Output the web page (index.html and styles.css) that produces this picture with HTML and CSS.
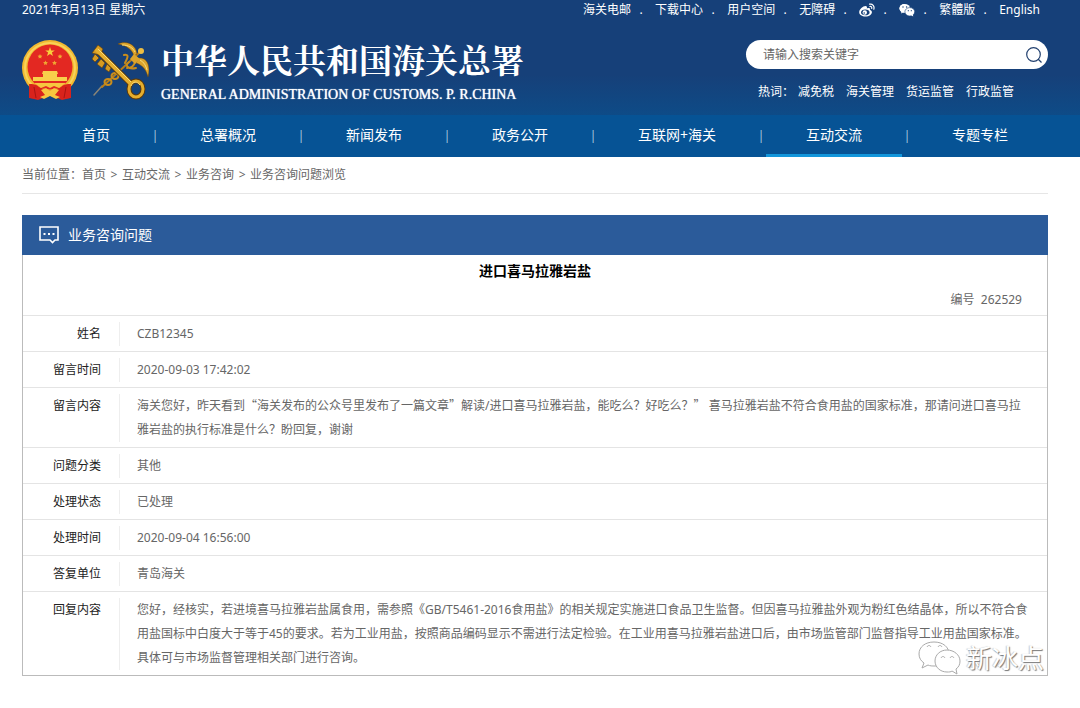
FILE: index.html
```html
<!DOCTYPE html>
<html lang="zh-CN">

<head>
  <meta charset="utf-8">
  <title>业务咨询问题</title>
  <link rel="stylesheet" href="styles.css">
</head>

<body>
  <header class="header">
    <div class="topbar">
      <span>2021年3月13日 星期六</span>
      <ul class="toplinks">
        <li><a href="#">海关电邮</a></li>
        <li><a href="#">下载中心</a></li>
        <li><a href="#">用户空间</a></li>
        <li><a href="#">无障碍</a></li>
        <li>
          <a href="#" aria-label="微博">
            <svg width="16" height="14" viewBox="0 0 16 14">
              <path fill="#fff" fill-rule="evenodd" d="M6.500 3C4 3 .2 6.200 .2 9.200c0 2.600 2.900 4.300 6.200 4.300 3.900 0 6.500-2.200 6.500-4.300 0-1.300-.9-1.900-1.900-2.200.5-1.500-.3-2.500-3.200-1.500C8.300 4 7.900 3 6.500 3zM6.300 6.500c2.600 0 4.300 1.200 4.300 2.900S8.700 12.300 6.300 12.300 2 11.200 2 9.500s1.800-3 4.300-3z"/>
              <circle cx="5.800" cy="9.500" r="2.200" fill="#fff"/>
              <circle cx="5.200" cy="10" r="0.800" fill="#164079"/>
              <path fill="none" stroke="#fff" stroke-width="1.200" stroke-linecap="round" d="M10.500 1.200c3-.7 5.300 1.900 4.300 5M10.900 3.500c1.300-.3 2.200.7 1.800 2"/>
            </svg>
          </a>
        </li>
        <li>
          <a href="#" aria-label="微信">
            <svg width="16" height="14" viewBox="0 0 16 14">
              <path fill="#fff" d="M5.800 1C2.800 1 .5 2.900.5 5.400c0 1.400.8 2.600 2 3.400L2 10.500l2-1 1.800.3z"/>
              <ellipse cx="5.800" cy="5.300" rx="5.300" ry="4.400" fill="#fff"/>
              <ellipse cx="10.800" cy="8.800" rx="4.900" ry="4.200" fill="#fff" stroke="#164079" stroke-width="0.600"/>
              <path fill="#fff" d="M12 12l2.200 1.600-.4-2.600z"/>
              <g fill="#164079"><circle cx="4" cy="4" r="0.700"/><circle cx="7.600" cy="4" r="0.700"/><circle cx="9.300" cy="7.700" r="0.600"/><circle cx="12.300" cy="7.700" r="0.600"/></g>
            </svg>
          </a>
        </li>
        <li><a href="#">繁體版</a></li>
        <li><a href="#">English</a></li>
      </ul>
    </div>

    <div class="banner">
      <a class="logo" href="#">
        <!-- 国徽 -->
        <svg width="56" height="60" viewBox="0 0 56 60">
          <path fill="#d8231c" d="M7 42h42v16l-9 1-12-4-12 4-9-1z"/>
          <circle cx="28" cy="28" r="28" fill="#f2b92f"/>
          <circle cx="28" cy="28" r="25" fill="none" stroke="#f9d25a" stroke-width="2"/>
          <circle cx="28" cy="27" r="22.500" fill="#e32822"/>
          <path fill="#f8cf3c" d="M28 7l1.200 3.400h3.600l-2.900 2.200 1.100 3.500-3-2.100-3 2.100 1.100-3.500-2.900-2.200h3.600z"/>
          <g fill="#f0a832">
            <path d="M18 14l.7 1.500 1.700.2-1.200 1.200.2 1.700-1.400-.8-1.400.8.200-1.700-1.200-1.200 1.700-.2z"/>
            <path d="M38 14l.7 1.500 1.700.2-1.200 1.200.2 1.700-1.400-.8-1.400.8.200-1.700-1.200-1.200 1.700-.2z"/>
            <path d="M23.500 20.500l.7 1.500 1.700.2-1.200 1.200.2 1.700-1.400-.8-1.400.8.200-1.700-1.200-1.200 1.700-.2z"/>
            <path d="M32.500 20.500l.7 1.500 1.700.2-1.200 1.200.2 1.700-1.400-.8-1.400.8.200-1.700-1.200-1.200 1.700-.2z"/>
          </g>
          <path fill="#f8d04b" d="M21 31h14l1 3h-1v3h10v4H11v-4h10v-3h-1z"/>
          <path fill="#d8231c" d="M7 44c4 0 7 0 10 3l11 4 11-4c3-3 6-3 10-3l-1 14-8 2-12-5-12 5-8-2z"/>
          <path fill="#f6c63f" d="M12 43h32l-7 5-5-2-4 2-4-2-5 2zM19 50l5-2 4 3 4-3 5 2-4 5 5 2-4 2-6-3-6 3-4-2 5-2z"/>
          <path fill="none" stroke="#a81512" d="M12 47l2 11M44 47l-2 11"/>
        </svg>
        <!-- 关徽 -->
        <svg class="key" width="58" height="58" viewBox="0 0 58 58">
          <g fill="none" stroke-linecap="round">
            <path d="M3 53l8-9" stroke="#8a8577" stroke-width="1.500"/>
            <path d="M11 45L49 10" stroke="#b67d1a" stroke-width="2"/>
            <g stroke="#c98d1c" stroke-width="2">
              <ellipse cx="17" cy="40" rx="3.500" ry="3"/>
              <ellipse cx="24" cy="34" rx="3.500" ry="3"/>
              <path d="M33 13c6-1 3 4 1 8M38 20c-5 3-1 8 7 6M36 26c5 0 7-2 8-6"/>
            </g>
          </g>
          <g fill="none" stroke="#5e3a08">
            <path d="M5 7l35 35" stroke-width="6"/>
            <ellipse cx="45" cy="47" rx="7" ry="8" stroke-width="5"/>
          </g>
          <path fill="#d79b21" stroke="#5e3a08" stroke-width="0.600" d="M1 11l6-8 5 4-3 6zM4 12l4 4-4 4-3-3zM10 17l4 4-3 5-5-4zM16 22l4 4-2 4-4-3z"/>
          <g fill="none" stroke="#e5ae2e">
            <path d="M5 7l35 35" stroke-width="4"/>
            <ellipse cx="45" cy="47" rx="7" ry="8" stroke-width="3"/>
          </g>
          <path fill="#dca42c" stroke="#6a430b" stroke-width="0.500" d="M27 2c8-4 18 0 19 10l-3 2C41 7 36 4 27 2zM48 16c8-1 12 8 9 19-2-8-6-12-12-14z"/>
          <path fill="#dca42c" d="M43 12l6 5-5 5-5-5z"/>
          <circle cx="50" cy="9" r="3" fill="#edbd43"/>
          <path fill="none" stroke="#f9dd7c" d="M7 7l33 33M40 44c2-5 6-5 9-1M31 3c7 0 11 3 13 7M49 18c4 2 6 6 7 10"/>
        </svg>
        <span class="names">
          <span class="name-cn">中华人民共和国海关总署</span>
          <span class="name-en">GENERAL ADMINISTRATION OF CUSTOMS. P. R.CHINA</span>
        </span>
      </a>

      <div class="search">
        <form class="searchbox">
          <input type="text" aria-label="搜索" placeholder="请输入搜索关键字">
          <button type="button" aria-label="搜索">
            <svg width="16" height="16" viewBox="0 0 16 16" fill="none" stroke="#22406f" stroke-width="1.200">
              <circle cx="7.500" cy="7.500" r="6.800"/>
              <path d="M12 12l3.500 3.500"/>
            </svg>
          </button>
        </form>
        <div class="hotwords">
          <span>热词：</span>
          <a href="#">减免税</a>
          <a href="#">海关管理</a>
          <a href="#">货运监管</a>
          <a href="#">行政监管</a>
        </div>
      </div>
    </div>
  </header>

  <nav>
    <ul class="nav">
      <li><a href="#">首页</a></li>
      <li><a href="#">总署概况</a></li>
      <li><a href="#">新闻发布</a></li>
      <li><a href="#">政务公开</a></li>
      <li><a href="#">互联网+海关</a></li>
      <li><a href="#" class="active">互动交流</a></li>
      <li><a href="#">专题专栏</a></li>
    </ul>
  </nav>

  <main class="main">
    <div class="crumbs">
      <span>当前位置：</span>
      <a href="#">首页</a>
      <span class="arrow">&gt;</span>
      <a href="#">互动交流</a>
      <span class="arrow">&gt;</span>
      <a href="#">业务咨询</a>
      <span class="arrow">&gt;</span>
      <a href="#">业务咨询问题浏览</a>
    </div>

    <section class="panel">
      <div class="panel-head">
        <svg width="20" height="18" viewBox="0 0 20 18" fill="none" stroke="#fff" stroke-width="1.600">
          <path d="M1 1h18v13h-3l-2.500 2.500L11 14H1z"/>
          <path stroke-width="2" d="M4.500 8h2M9 8h2M13.500 8h2"/>
        </svg>
        <h2>业务咨询问题</h2>
      </div>
      <h1>进口喜马拉雅岩盐</h1>
      <p class="number">编号&nbsp; 262529</p>

      <table class="detail">
        <tr><th scope="row">姓名</th><td><div>CZB12345</div></td></tr>
        <tr><th scope="row">留言时间</th><td><div>2020-09-03 17:42:02</div></td></tr>
        <tr><th scope="row">留言内容</th><td><div>海关您好，昨天看到<span class="quote">“</span>海关发布的公众号里发布了一篇文章<span class="quote">”</span>解读/进口喜马拉雅岩盐，能吃么？好吃么？<span class="quote">”</span> 喜马拉雅岩盐不符合食用盐的国家标准，那请问进口喜马拉雅岩盐的执行标准是什么？盼回复，谢谢</div></td></tr>
        <tr><th scope="row">问题分类</th><td><div>其他</div></td></tr>
        <tr><th scope="row">处理状态</th><td><div>已处理</div></td></tr>
        <tr><th scope="row">处理时间</th><td><div>2020-09-04 16:56:00</div></td></tr>
        <tr><th scope="row">答复单位</th><td><div>青岛海关</div></td></tr>
        <tr><th scope="row">回复内容</th><td><div>您好，经核实，若进境喜马拉雅岩盐属食用，需参照《GB/T5461-2016食用盐》的相关规定实施进口食品卫生监督。但因喜马拉雅盐外观为粉红色结晶体，所以不符合食用盐国标中白度大于等于45的要求。若为工业用盐，按照商品编码显示不需进行法定检验。在工业用喜马拉雅岩盐进口后，由市场监管部门监督指导工业用盐国家标准。具体可与市场监督管理相关部门进行咨询。</div></td></tr>
      </table>

      <div class="watermark">
        <svg width="44" height="34" viewBox="0 0 44 34" fill="#fff" stroke="#aaa">
          <path d="M16 1C7 1 1 6 1 13c0 4 2 7 5 9l-2 5 6-3c2 1 4 1 7 1 8 0 14-5 14-12S25 1 16 1z"/>
          <path d="M29 9c-7 0-12 5-12 11s5 11 12 11c2 0 4 0 5-1l5 3-1-5c3-2 4-5 4-8 0-6-6-11-13-11z"/>
          <path fill="none" d="M9 6c1-2 3-2 4 0M20 6c1-2 3-2 4 0M23 17c1-2 3-2 4 0M32 17c1-2 3-2 4 0"/>
        </svg>
        <span>新冰点</span>
      </div>
    </section>
  </main>
</body>

</html>
```
FILE: styles.css
```css
* {
  box-sizing: border-box;
}
body {
  margin: 0;
  background-color: #fff;
  font-family: "Noto Sans", "Noto Sans CJK SC", sans-serif;
  font-size: 12px;
  line-height: 18px;
  color: #666;
}
a {
  color: inherit;
  text-decoration: none;
}
ul {
  margin: 0;
  padding: 0;
  list-style: none;
}
svg {
  display: block;
  flex: none;
}

/* header */
.header {
  padding-bottom: 9px;
  background: linear-gradient(#164079 65%, #0e4b87);
  color: #fff;
}
.topbar {
  display: flex;
  justify-content: space-between;
  padding: 1px 40px 0 22px;
}
.toplinks {
  display: flex;
}
.toplinks li {
  display: flex;
  align-items: center;
}
.toplinks li + li::before {
  content: ".";
  width: 20px;
  padding-right: 4px;
  text-align: center;
}
.banner {
  display: flex;
  justify-content: space-between;
  align-items: flex-start;
  padding: 21px 32px 0 22px;
}
.logo {
  display: flex;
}
.key {
  margin: 2px 0 0 13px;
}
.names {
  display: flex;
  flex-direction: column;
  gap: 7px;
  margin-left: 12px;
  white-space: nowrap;
}
.name-cn {
  font-family: "Noto Serif CJK SC", "Noto Sans CJK SC", serif;
  font-size: 33px;
  font-weight: bold;
  line-height: 37px;
}
.name-en {
  font-family: "Liberation Serif", serif;
  font-size: 14px;
  line-height: 22px;
  text-shadow: 0 0 1px #fff;
}
.search {
  width: 302px;
}
.searchbox {
  display: flex;
  align-items: center;
  height: 29px;
  padding: 0 6px 0 17px;
  border-radius: 15px;
  background-color: #fff;
}
.searchbox input {
  flex: 1;
  min-width: 0;
  padding: 1px 0 0;
  border: 0;
  outline: 0;
  background: none;
  font: inherit;
}
.searchbox input::placeholder {
  color: #666;
}
.searchbox button {
  padding: 0;
  border: 0;
  background: none;
}
.hotwords {
  display: flex;
  gap: 12px;
  padding: 14px 0 0 12px;
}
.hotwords span {
  margin-right: -8px;
}

/* nav */
.nav {
  display: flex;
  padding-left: 42px;
  background-color: #065395;
  color: #fff;
  font-size: 14px;
  line-height: 39px;
  white-space: nowrap;
}
.nav li {
  display: flex;
}
.nav li + li::before {
  content: "|";
  width: 10px;
  font-size: 12px;
  line-height: 42px;
  text-align: center;
  color: #a9c4dc;
}
.nav a {
  padding: 0 40px;
  border-bottom: 3px solid transparent;
}
.nav .active {
  border-bottom-color: #1296db;
}

/* content */
.main {
  padding: 0 32px 32px 22px;
}
.crumbs {
  display: flex;
  padding: 9px 0;
  border-bottom: 1px solid #e6e6e6;
}
.arrow {
  width: 16px;
  text-align: center;
}
.panel {
  position: relative;
  margin-top: 21px;
  border: 1px solid #bbb;
  border-top: 0;
}
.panel-head {
  display: flex;
  align-items: center;
  gap: 9px;
  height: 40px;
  margin: 0 -1px;
  padding-left: 17px;
  background-color: #2b5b9a;
  color: #fff;
}
.panel-head h2 {
  margin: 0;
  font-size: 14px;
  font-weight: normal;
}
h1 {
  margin: 0;
  font-size: 14px;
  line-height: 32px;
  text-align: center;
  color: #000;
}
.number {
  margin: 0;
  padding: 4px 25px 6px 0;
  text-align: right;
}
.detail {
  width: 100%;
  border-collapse: separate;
  border-spacing: 0;
  line-height: 24px;
}
.detail th,
.detail td {
  padding: 6px 0 5px;
  border-top: 1px solid #e4e4e4;
  vertical-align: top;
}
.detail th {
  width: 96px;
  padding-right: 18px;
  font-weight: normal;
  text-align: right;
  color: #222;
}
.detail div {
  padding: 0 16px 0 17px;
  border-left: 1px solid #eee;
}
.quote {
  font-family: "Noto Sans CJK SC", sans-serif;
  line-height: 1;
}
.watermark {
  position: absolute;
  right: 3px;
  bottom: 0;
  display: flex;
  align-items: center;
  gap: 4px;
  font-size: 26px;
  line-height: 28px;
  color: #fff;
  text-shadow: 1px 1px 1px #777, -1px 0 1px #ccc;
}
```
